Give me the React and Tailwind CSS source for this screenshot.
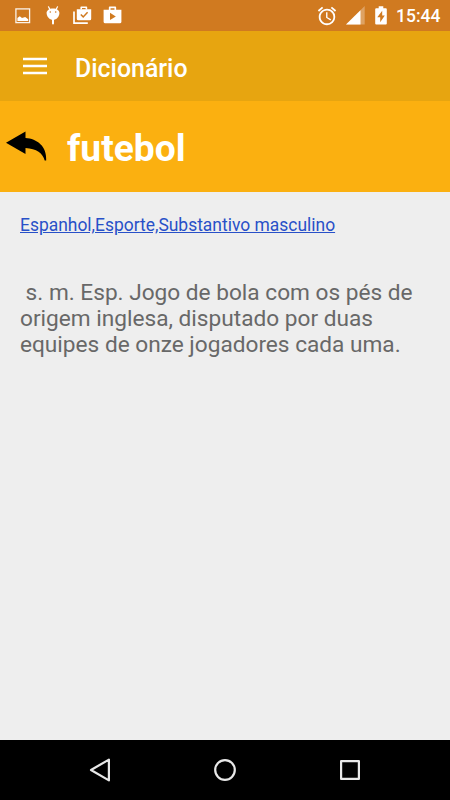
import { MdAlarm } from 'react-icons/md'

function PhotoIcon() {
  return (
    <svg width="16" height="16" viewBox="0 0 16 16" fill="none">
      <rect x=".9" y=".9" width="13.700" height="13.700" stroke="#fff" strokeOpacity="0.9" strokeWidth="1.300" />
      <path d="M2.400 13V10l2.400-1.800 2.200 1.700 3.200-1 3 2.300V13z" fill="#fff" />
    </svg>
  )
}

function BugIcon() {
  return (
    <svg width="14" height="19" viewBox="0 0 14 19">
      <path d="M2.500.8l1.500 2.800M11.500.8L10 3.600" stroke="#fff" strokeWidth="1.200" strokeLinecap="round" />
      <path d="M7 2.400c3.800 0 6.400 1.800 6.400 4.600 0 3.600-2.900 6.900-6.400 6.900S.6 10.600.6 7C.6 4.200 3.200 2.400 7 2.400z" fill="#fff" />
      <path d="M7 13v4.600" stroke="#fff" strokeWidth="2" strokeLinecap="round" />
      <circle cx="4.300" cy="6" r=".8" fill="#d07a20" />
      <circle cx="9.700" cy="6" r=".8" fill="#d07a20" />
    </svg>
  )
}

function ShopCheckIcon() {
  return (
    <svg width="19" height="19" viewBox="0 0 19 19" fill="none">
      <path d="M1 5.500v11.700h13.800" stroke="#fff" strokeWidth="1.700" />
      <path d="M8.200 3.500V1.300h5.200v2.200" stroke="#fff" strokeWidth="1.600" strokeLinejoin="round" />
      <path d="M3.800 3.200h14.400v9.600q0 1.500-1.500 1.500H5.300q-1.500 0-1.500-1.500z" fill="#fff" />
      <path d="M7.800 8.500l2.400 2.400 4.400-4.700" stroke="#d07a20" strokeWidth="1.500" />
    </svg>
  )
}

function ShopPlayIcon() {
  return (
    <svg width="19" height="19" viewBox="0 0 19 19" fill="none">
      <path d="M6.700 4V1.400h5.600V4" stroke="#fff" strokeWidth="1.700" strokeLinejoin="round" />
      <path d="M.6 3.700h17.800v12q0 1.600-1.600 1.600H2.200q-1.600 0-1.600-1.600z" fill="#fff" />
      <path d="M7 6.700v7.400l5.800-3.700z" fill="#d07a20" />
    </svg>
  )
}

function SignalIcon() {
  return (
    <svg width="19" height="19" viewBox="0 0 19 19">
      <path d="M0 18.500L18.700 0v18.500z" fill="#fff" fillOpacity="0.3" />
      <path d="M0 18.500L14.500 4.200v14.300z" fill="#fff" />
    </svg>
  )
}

function BatteryIcon() {
  return (
    <svg width="12" height="19" viewBox="0 0 12 19">
      <path d="M3.700.3h4.600v1.900h2.500q1 0 1 1v14.300q0 1-1 1H1.200q-1 0-1-1V3.200q0-1 1-1h2.500z" fill="#fff" />
      <path d="M7.200 4.800L2.300 11.300h2.900v4.900l4.600-6.700H7.200z" fill="#d07a20" />
    </svg>
  )
}

function StatusBar() {
  return (
    <div className="flex h-[31px] items-center bg-[#d07a20] pr-[10px] pl-[15px] text-white">
      <PhotoIcon />
      <div className="ml-[15px]"><BugIcon /></div>
      <div className="ml-[13px]"><ShopCheckIcon /></div>
      <div className="ml-[11px]"><ShopPlayIcon /></div>
      <MdAlarm className="ml-auto size-[22px]" />
      <div className="ml-2"><SignalIcon /></div>
      <div className="ml-[10px]"><BatteryIcon /></div>
      <span className="ml-2 w-[45px] pt-[3px] pl-px text-[17.5px] leading-none font-medium whitespace-nowrap">15:44</span>
    </div>
  )
}

function AppBar() {
  return (
    <header className="flex h-[70px] items-center bg-[#e7a510] pl-[23px] text-white">
      <svg width="24" height="18" viewBox="0 0 24 18" className="mb-px">
        <path d="M0 2h24M0 9h24M0 16h24" stroke="#fff" strokeWidth="2.600" />
      </svg>
      <h1 className="ml-7 pt-[6px] text-[24.9px] leading-7 font-medium">Dicionário</h1>
    </header>
  )
}

function WordHeader({ word }) {
  return (
    <div className="flex h-[91px] items-center bg-[#fbb010] pl-[6px] text-white">
      <svg width="41" height="31" viewBox="0 0 41 31">
        <path d="M0 11.700L19.500.4v6.500C31 7.600 41 15 40.200 29.500h-1.500C37 22.500 30.500 17.500 19.500 17v6z" fill="#000" />
      </svg>
      <h2 className="ml-5 pt-1 text-[37.2px] leading-none font-bold">{word}</h2>
    </div>
  )
}

function NavBar() {
  return (
    <nav className="flex h-[60px] items-center justify-between bg-black px-[88px]">
      <svg width="24" height="26" viewBox="0 0 24 26" fill="none" stroke="#e8e8e8" strokeWidth="2.200" strokeLinejoin="round">
        <path d="M3 13L20.900 2.600v20.800z" />
      </svg>
      <svg width="24" height="24" viewBox="0 0 24 24" fill="none" stroke="#e8e8e8" strokeWidth="2.200">
        <circle cx="12" cy="12" r="9.800" />
      </svg>
      <svg width="24" height="24" viewBox="0 0 24 24" fill="none" stroke="#e8e8e8" strokeWidth="2.200" strokeLinejoin="round">
        <rect x="3.100" y="3.100" width="17.800" height="17.800" />
      </svg>
    </nav>
  )
}

export default function App() {
  return (
    <div className="flex h-[800px] w-[450px] flex-col overflow-hidden bg-[#eeeeee] font-[Roboto,sans-serif]">
      <StatusBar />
      <AppBar />
      <WordHeader word="futebol" />
      <main className="flex-1 px-5 pt-[22px]">
        <a href="#" className="block text-[17.45px] leading-[22px] whitespace-nowrap text-[#2850c8] underline">
          Espanhol,Esporte,Substantivo masculino
        </a>
        <p className="mt-11 text-[22.65px] leading-[26px] whitespace-pre text-[#686868]">
          {' s. m. Esp. Jogo de bola com os pés de\norigem inglesa, disputado por duas\nequipes de onze jogadores cada uma.'}
        </p>
      </main>
      <NavBar />
    </div>
  )
}
